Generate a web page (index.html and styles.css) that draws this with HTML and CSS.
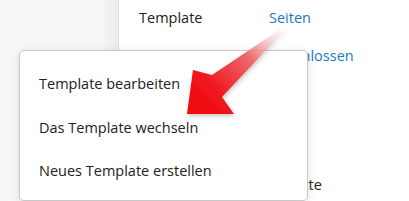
FILE: index.html
```html
<!DOCTYPE html>
<html lang="de">
<head>
  <meta charset="UTF-8" />
  <title>Template</title>
  <link rel="stylesheet" href="styles.css">
</head>
<body>
  <div class="layout">
    <aside class="sidebar"></aside>
    <div class="sidebar-edge"></div>
    <main class="content">
      <table class="props">
        <tr><td>Template</td><td><a href="#">Seiten</a></td></tr>
        <tr><td></td><td><a href="#">Geschlossen</a></td></tr>
        <tr><td></td><td></td></tr>
        <tr><td></td><td></td></tr>
        <tr><td></td><td>Objekte</td></tr>
      </table>
    </main>
  </div>

  <!-- context menu -->
  <div class="popup">
    <div class="popup-item">Template bearbeiten</div>
    <div class="popup-item">Das Template wechseln</div>
    <div class="popup-item">Neues Template erstellen</div>
  </div>

  <svg class="arrow" width="409" height="201" viewBox="0 0 409 201">
    <defs>
      <linearGradient id="arrowFill" x1="284" y1="27" x2="200" y2="105" gradientUnits="userSpaceOnUse">
        <stop offset="0" stop-color="#f6f6f6" stop-opacity="0.2" />
        <stop offset="0.4" stop-color="#ee6a6e" />
        <stop offset="0.8" stop-color="#ee1a20" />
        <stop offset="1" stop-color="#f0080e" />
      </linearGradient>
      <filter id="arrowShadow" x="-20%" y="-20%" width="140%" height="140%">
        <feDropShadow dx="1" dy="2" stdDeviation="2" flood-color="#000" flood-opacity="0.22" />
      </filter>
    </defs>
    <polygon points="285,26 212,75 193,70 187,114 234,114 222,97 286,29"
             fill="url(#arrowFill)" filter="url(#arrowShadow)" />
  </svg>
</body>
</html>
```

FILE: styles.css
```css
* {
  margin: 0;
  padding: 0;
  box-sizing: border-box;
}
body {
  background: #fff;
  color: #222;
  font-family: 'Open Sans', 'Noto Sans', sans-serif;
  font-size: 14.5px;
  overflow: hidden;
}
.layout {
  display: flex;
  height: 201px;
}
/* Sidebar */
.sidebar {
  width: 103px;
  background: #f7f7f7;
}
.sidebar-edge {
  width: 16px;
  background: linear-gradient(to right, #f4f4f4, #ececec);
  border-right: 1px solid #dedede;
}
/* Properties table */
.content {
  flex: 1;
  padding-left: 20px;
}
.props {
  border-collapse: collapse;
}
.props td {
  height: 43px;
  padding: 0;
  vertical-align: middle;
}
.props tr:first-child td {
  height: 34px;
}
.props td:first-child {
  width: 130px;
}
.props a {
  color: #1b78c2;
  text-decoration: none;
}
/* Popup menu */
.popup {
  position: absolute;
  left: 19px;
  top: 50px;
  width: 289px;
  height: 151px;
  background: #fff;
  border: 1px solid #c9c9c9;
  border-radius: 5px;
  box-shadow: 0 2px 8px rgba(0, 0, 0, 0.12);
  padding-top: 11px;
}
.popup-item {
  height: 43.5px;
  line-height: 43.5px;
  padding-left: 19px;
  color: #222;
}
.arrow {
  position: absolute;
  left: 0;
  top: 0;
  pointer-events: none;
}
```
